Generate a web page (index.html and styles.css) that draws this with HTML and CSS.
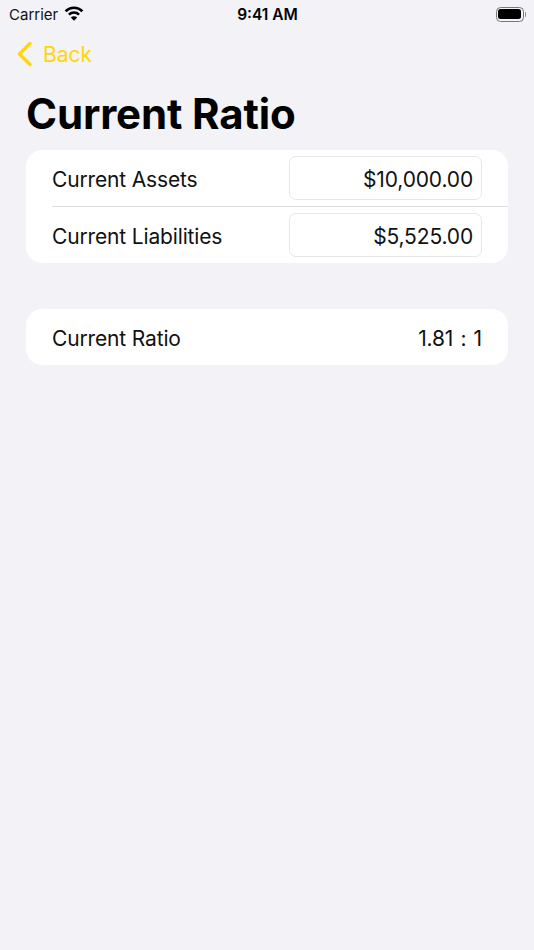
FILE: index.html
```html
<!DOCTYPE html>
<html lang="en">
<head>
  <meta charset="UTF-8" />
  <meta name="viewport" content="width=device-width, initial-scale=1" />
  <title>Current Ratio</title>
  <link rel="stylesheet" href="styles.css">
</head>
<body>
  <header class="status-bar">
    <div class="status-left">
      <span class="carrier">Carrier</span>
      <svg class="wifi" width="20" height="15" viewBox="0 0 20 15">
        <path class="wifi-arc" d="M1.6 5.2A12 12 0 0 1 18.4 5.2"/>
        <path class="wifi-arc" d="M4.9 8.6A7.4 7.4 0 0 1 15.1 8.6"/>
        <path d="M10 14.8 6.8 11.5A4.5 4.5 0 0 1 13.2 11.5Z"/>
      </svg>
    </div>
    <div class="clock">9:41 AM</div>
    <div class="status-right">
      <div class="battery"><div class="battery-fill"></div></div>
      <div class="battery-cap"></div>
    </div>
  </header>

  <nav class="nav-bar">
    <svg class="chevron" width="16" height="26" viewBox="0 0 16 26">
      <path d="M14 2.5 3.5 13 14 23.5" fill="none" stroke="#ffd60a" stroke-width="3.4" stroke-linecap="round" stroke-linejoin="round"/>
    </svg>
    <span class="back-label">Back</span>
  </nav>

  <main>
    <h1>Current Ratio</h1>

    <section class="card">
      <div class="row">
        <span class="label">Current Assets</span>
        <div class="field">$10,000.00</div>
      </div>
      <div class="row">
        <span class="label">Current Liabilities</span>
        <div class="field">$5,525.00</div>
      </div>
    </section>

    <section class="card result">
      <div class="row">
        <span class="label">Current Ratio</span>
        <span class="value">1.81 : 1</span>
      </div>
    </section>
  </main>
</body>
</html>
```

FILE: styles.css
```css
* { box-sizing: border-box; }

html, body {
  margin: 0;
  padding: 0;
  height: 100%;
  overflow: hidden;
}

body {
  background: #f2f2f7;
  color: #000;
  font-family: Inter, "Liberation Sans", sans-serif;
}

.status-bar {
  height: 28px;
  display: grid;
  grid-template-columns: 1fr auto 1fr;
  align-items: center;
  padding: 0 8px 0 9px;
}

.status-left {
  display: flex;
  align-items: center;
  gap: 6px;
}

.carrier {
  font-size: 15px;
  color: #111;
}

.wifi {
  fill: #000;
  margin-top: -2px;
}

.wifi-arc {
  fill: none;
  stroke: #000;
  stroke-width: 2.6px;
}

.clock {
  font-size: 15.5px;
  font-weight: 600;
}

.status-right {
  display: flex;
  align-items: center;
  justify-content: flex-end;
  gap: 1px;
}

.battery {
  width: 28px;
  height: 15px;
  border: 1px solid #77777c;
  border-radius: 4.5px;
  padding: 1.5px;
}

.battery-fill {
  height: 100%;
  background: #000;
  border-radius: 2.5px;
}

.battery-cap {
  width: 1.5px;
  height: 5px;
  background: #8e8e93;
  border-radius: 0 1px 1px 0;
}

.nav-bar {
  height: 52px;
  display: flex;
  align-items: center;
  gap: 11px;
  padding: 0 0 0 16px;
}

.back-label {
  font-size: 21px;
  color: #ffd60a;
}

main {
  padding: 0 26px;
}

h1 {
  margin: 0;
  height: 70px;
  line-height: 68px;
  font-size: 42px;
  font-weight: 700;
  letter-spacing: -0.15px;
}

.card {
  background: #fff;
  border-radius: 16px;
  overflow: hidden;
}

.card.result {
  margin-top: 46px;
}

.row {
  height: 56px;
  display: flex;
  align-items: center;
  justify-content: space-between;
  margin-left: 26px;
  padding-right: 26px;
}

.row + .row {
  height: 57px;
  border-top: 1px solid #dcdce0;
}

.label,
.value,
.field {
  font-size: 21px;
  letter-spacing: -0.15px;
  color: #111;
}

.label,
.value {
  padding-top: 2px;
}

.value {
  word-spacing: 1.5px;
}

.field {
  width: 193px;
  height: 44px;
  line-height: 45px;
  border: 1px solid #e6e6e9;
  border-radius: 7px;
  padding-right: 8px;
  text-align: right;
}
```
